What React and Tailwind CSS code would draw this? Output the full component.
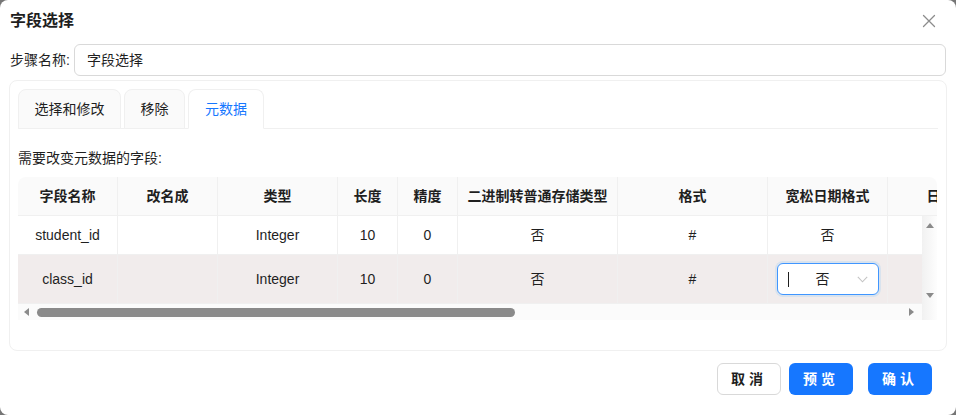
import React from "react";

const FONT = { fontFamily: '"Liberation Sans", "Noto Sans CJK SC", sans-serif' };

const columns = [
  { key: "name", title: "字段名称", w: "w-[100px]" },
  { key: "rename", title: "改名成", w: "w-[100px]" },
  { key: "type", title: "类型", w: "w-[120px]" },
  { key: "len", title: "长度", w: "w-[60px]" },
  { key: "prec", title: "精度", w: "w-[60px]" },
  { key: "bin", title: "二进制转普通存储类型", w: "w-[160px]" },
  { key: "fmt", title: "格式", w: "w-[150px]" },
  { key: "lenient", title: "宽松日期格式", w: "w-[120px]" },
  { key: "date", title: "日期格式", w: "w-[134px]" },
];

const rows = [
  { name: "student_id", rename: "", type: "Integer", len: "10", prec: "0", bin: "否", fmt: "#", lenient: "否", date: "" },
  { name: "class_id", rename: "", type: "Integer", len: "10", prec: "0", bin: "否", fmt: "#", lenient: "select", date: "" },
];

function CloseIcon() {
  return (
    <svg width="14" height="14" viewBox="0 0 14 14" fill="none">
      <path d="M1.5 1.5 L12.5 12.5 M12.5 1.5 L1.5 12.5" stroke="#8c8c8c" strokeWidth="1.3" strokeLinecap="round" />
    </svg>
  );
}

function Chevron() {
  return (
    <svg width="11" height="7" viewBox="0 0 11 7" fill="none">
      <path d="M0.8 0.8 L5.5 5.8 L10.2 0.8" stroke="#c4c4c4" strokeWidth="1.1" />
    </svg>
  );
}

function Tri({ dir }) {
  const paths = {
    up: "M0 6 L4 1 L8 6 Z",
    down: "M0 1 L8 1 L4 6 Z",
    left: "M6 0 L6 8 L1 4 Z",
    right: "M1 0 L1 8 L6 4 Z",
  };
  return (
    <svg width="8" height="8" viewBox="0 0 8 8">
      <path d={paths[dir]} fill="#8a8a8a" />
    </svg>
  );
}

function LenientSelect() {
  return (
    <div className="relative flex h-[32px] w-[102px] items-center rounded-md border border-[#4096ff] bg-white shadow-[0_0_0_2px_rgba(5,145,255,0.1)]">
      <span className="ml-[10px] h-[15px] w-px bg-[#1f1f1f]" />
      <span className="flex-1 text-center text-[14px] text-[#1f1f1f]">否</span>
      <span className="mr-[10px] flex items-center">
        <Chevron />
      </span>
    </div>
  );
}

export default function App() {
  return (
    <div className="h-[415px] w-[956px] bg-[#767676]" style={FONT}>
      <div className="flex h-full w-full flex-col rounded-lg bg-white">
        {/* title bar */}
        <div className="flex h-[22px] items-center justify-between pl-[10px] pr-[20px] mt-[10px]">
          <span className="text-[16px] font-bold leading-[22px] text-[#1f1f1f]">字段选择</span>
          <CloseIcon />
        </div>

        {/* step name */}
        <div className="mt-[12px] flex items-center pl-[10px] pr-[10px]">
          <span className="w-[64px] text-[14px] text-[#1f1f1f]">步骤名称:</span>
          <div className="flex h-[32px] flex-1 items-center rounded-md border border-[#d9d9d9] px-[12px] text-[14px] text-[#1f1f1f]">
            字段选择
          </div>
        </div>

        {/* tab card */}
        <div className="mx-[9px] mt-[4px] h-[271px] rounded-lg border border-[#f0f0f0] px-[8px] pt-[8px]">
          <div className="flex h-[40px] items-end gap-[3px] border-b border-[#f0f0f0]">
            <div className="-mb-px flex h-[40px] w-[103px] items-center justify-center rounded-t-lg border border-[#f0f0f0] bg-[#fafafa] text-[14px] text-[#1f1f1f]">
              选择和修改
            </div>
            <div className="-mb-px flex h-[40px] w-[61px] items-center justify-center rounded-t-lg border border-[#f0f0f0] bg-[#fafafa] text-[14px] text-[#1f1f1f]">
              移除
            </div>
            <div className="-mb-px flex h-[40px] w-[76px] items-center justify-center rounded-t-lg border border-[#f0f0f0] border-b-white bg-white text-[14px] text-[#1677ff]">
              元数据
            </div>
          </div>

          <div className="mt-[18px] text-[14px] leading-[22px] text-[#1f1f1f]">需要改变元数据的字段:</div>

          {/* metadata table */}
          <div className="mt-[8px] w-[919px] overflow-hidden rounded-t-lg">
            <div className="flex h-[39px] overflow-hidden border-b border-[#f0f0f0] bg-[#fafafa]">
              {columns.map((c) => (
                <div
                  key={c.key}
                  className={`${c.w} flex shrink-0 items-center justify-center border-r border-[#f0f0f0] text-[14px] font-bold text-[#1f1f1f] whitespace-nowrap`}
                >
                  {c.title}
                </div>
              ))}
            </div>

            <div className="flex">
              <div className="w-[904px] overflow-hidden">
                {rows.map((r, i) => (
                  <div
                    key={r.name}
                    className={`flex border-b border-[#f0f0f0] ${i === 1 ? "h-[49px] bg-[#f1ecec]" : "h-[39px] bg-white"}`}
                  >
                    {columns.map((c) => (
                      <div
                        key={c.key}
                        className={`${c.w} flex shrink-0 items-center justify-center border-r border-[#f0f0f0] text-[14px] text-[#1f1f1f] whitespace-nowrap`}
                      >
                        {r[c.key] === "select" ? <LenientSelect /> : r[c.key]}
                      </div>
                    ))}
                  </div>
                ))}

                {/* horizontal scrollbar */}
                <div className="flex h-[16px] items-center bg-[#fbfbfb] pl-[5px] pr-[6px]">
                  <Tri dir="left" />
                  <div className="ml-[6px] h-[9px] w-[478px] rounded-full bg-[#8a8a8a]" />
                  <div className="flex-1" />
                  <Tri dir="right" />
                </div>
              </div>

              {/* vertical scrollbar */}
              <div className="flex w-[15px] flex-col items-center bg-gradient-to-r from-[#f1f1f1] to-[#fdfdfd] pt-[6px]">
                <Tri dir="up" />
                <div className="h-[62px]" />
                <Tri dir="down" />
              </div>
            </div>
          </div>
        </div>

        {/* footer */}
        <div className="mt-[12px] flex justify-end pr-[24px]">
          <button className="flex h-[32px] w-[64px] items-center justify-center rounded-md border border-[#d9d9d9] bg-white text-[14px] font-semibold tracking-[4px] text-[#1f1f1f]">
            取消
          </button>
          <button className="ml-[8px] flex h-[32px] w-[64px] items-center justify-center rounded-md bg-[#1677ff] text-[14px] font-semibold tracking-[4px] text-white">
            预览
          </button>
          <button className="ml-[15px] flex h-[32px] w-[64px] items-center justify-center rounded-md bg-[#1677ff] text-[14px] font-semibold tracking-[4px] text-white">
            确认
          </button>
        </div>
      </div>
    </div>
  );
}
